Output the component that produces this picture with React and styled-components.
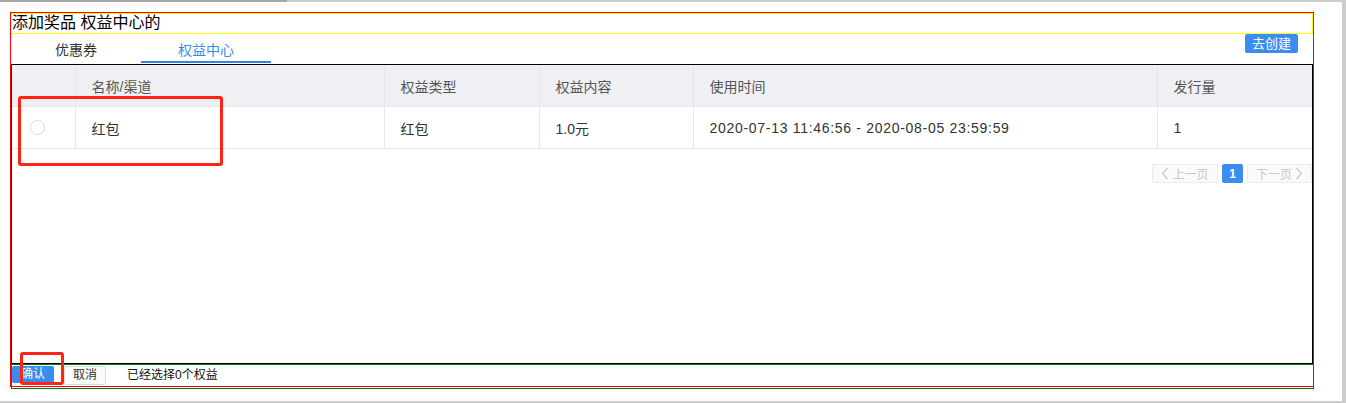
import styled, { createGlobalStyle } from 'styled-components';

const GlobalStyle = createGlobalStyle`
  html, body {
    margin: 0;
    padding: 0;
    background: #fff;
  }
  body {
    font-family: "Microsoft YaHei", "Liberation Sans", "Noto Sans CJK SC", sans-serif;
    color: #333;
  }
`;

const Page = styled.div`
  position: relative;
  width: 1346px;
  height: 403px;
  display: flex;
  flex-direction: column;
  overflow: hidden;
`;

const ScrollBar = styled.div`
  display: flex;
  height: 2px;
  background: #cdcdcd;
`;

const ScrollThumb = styled.div`
  width: 287px;
  background: #a6a6a6;
`;

const Middle = styled.div`
  flex: 1;
  display: flex;
`;

const Content = styled.div`
  flex: 1;
  padding: 10px 0 0 10px;
`;

const Gutter = styled.div`
  width: 4px;
  background: #cdcdcd;
`;

const BottomBar = styled.div`
  height: 2px;
  background: #cdcdcd;
`;

const Outline = styled.div`
  box-sizing: border-box;
  width: 1304px;
  height: 375px;
  border: 1px solid ${({ color }) => color || 'red'};
`;

const Title = styled.div`
  box-sizing: border-box;
  height: 21px;
  width: 1302px;
  border: 1px solid #ffff00;
  border-left: none;
  font-size: 16px;
  line-height: 18px;
  color: #000;
  padding-left: 1px;
`;

const TabRow = styled.div`
  display: flex;
  align-items: flex-start;
  height: 30px;
`;

const Tab = styled.div`
  box-sizing: border-box;
  width: 130px;
  height: 29px;
  padding-top: 5px;
  text-align: center;
  font-size: 14px;
  color: ${({ active }) => (active ? '#3a8ee6' : '#333')};
  border-bottom: 2px solid ${({ active }) => (active ? '#2f86e8' : 'transparent')};
`;

const CreateButton = styled.button`
  margin-left: auto;
  margin-right: 15px;
  width: 53px;
  height: 19px;
  border: none;
  border-radius: 2px;
  background: #3a8cf0;
  color: #fff;
  font-family: inherit;
  font-size: 13px;
  line-height: 19px;
  padding: 0;
`;

const TableBox = styled.div`
  box-sizing: border-box;
  width: 1302px;
  height: 300px;
  border: 1px solid #000;
  display: flex;
  flex-direction: column;
`;

const Table = styled.table`
  width: 1300px;
  border-collapse: collapse;
  table-layout: fixed;
  font-size: 14px;
`;

const Th = styled.th`
  height: 41px;
  padding: 0 16px;
  text-align: left;
  font-weight: normal;
  color: #555;
  background: #eff0f3;
  border-bottom: 1px solid #e8e8e8;
  border-left: ${({ first }) => (first ? 'none' : '1px solid #e8e8e8')};
`;

const Td = styled.td`
  height: 41px;
  padding: 0 16px;
  color: #333;
  letter-spacing: ${({ wide }) => (wide ? '0.7px' : 'normal')};
  border-bottom: 1px solid #e8e8e8;
  border-left: ${({ first }) => (first ? 'none' : '1px solid #e8e8e8')};
`;

const Radio = styled.span`
  display: block;
  box-sizing: border-box;
  width: 15px;
  height: 15px;
  margin-left: 2px;
  border: 1px solid #d9d9d9;
  border-radius: 50%;
`;

const Pager = styled.div`
  display: flex;
  justify-content: flex-end;
  gap: 4px;
  margin-top: 15px;
`;

const PageBtn = styled.span`
  box-sizing: border-box;
  height: 19px;
  width: ${({ w }) => w}px;
  display: flex;
  align-items: center;
  justify-content: center;
  gap: 3px;
  font-size: 12px;
  border: 1px solid ${({ current }) => (current ? '#3a8cf0' : '#ececec')};
  background: ${({ current }) => (current ? '#3a8cf0' : '#fafafa')};
  color: ${({ current }) => (current ? '#fff' : '#c5c8ce')};
  font-weight: ${({ current }) => (current ? 'bold' : 'normal')};
  border-radius: 2px;
`;

const Footer = styled.div`
  box-sizing: border-box;
  width: 1303px;
  height: 25px;
  border: 1px solid #008000;
  display: flex;
  align-items: flex-start;
  padding-top: 1px;
  font-size: 12px;
`;

const FooterButton = styled.button`
  height: ${({ primary }) => (primary ? '17px' : '19px')};
  padding: 0 ${({ primary }) => (primary ? '9px' : '8px')};
  margin-right: ${({ primary }) => (primary ? '10px' : '21px')};
  border: ${({ primary }) => (primary ? 'none' : '1px solid #dcdcdc')};
  background: ${({ primary }) => (primary ? '#3a8cf0' : '#fafafa')};
  color: ${({ primary }) => (primary ? '#fff' : '#333')};
  font-family: inherit;
  font-size: 12px;
  line-height: 17px;
  border-radius: 2px;
`;

const FooterText = styled.span`
  line-height: 19px;
  color: #111;
`;

const Mark = styled.div`
  position: absolute;
  box-sizing: border-box;
  border: 3px solid #ff2414;
  border-radius: 3px;
  left: ${({ x }) => x}px;
  top: ${({ y }) => y}px;
  width: ${({ w }) => w}px;
  height: ${({ h }) => h}px;
`;

const Chevron = ({ dir }) => (
  <svg width="8" height="13" viewBox="0 0 8 13">
    <path
      d={dir === 'left' ? 'M6.5 1 L1.5 6.5 L6.5 12' : 'M1.5 1 L6.5 6.5 L1.5 12'}
      fill="none"
      stroke="#c5c8ce"
      strokeWidth="1.2"
    />
  </svg>
);

const columns = [
  { key: 'radio', label: '', width: 63 },
  { key: 'name', label: '名称/渠道', width: 309 },
  { key: 'type', label: '权益类型', width: 155 },
  { key: 'content', label: '权益内容', width: 154 },
  { key: 'time', label: '使用时间', width: 464 },
  { key: 'count', label: '发行量', width: 155 },
];

const rows = [
  {
    name: '红包',
    type: '红包',
    content: '1.0元',
    time: '2020-07-13 11:46:56 - 2020-08-05 23:59:59',
    count: '1',
  },
];

const App = () => {
  return (
    <>
      <GlobalStyle />
      <Page>
        <ScrollBar>
          <ScrollThumb />
        </ScrollBar>
        <Middle>
          <Content>
            <Outline color="red">
              <Title>添加奖品 权益中心的</Title>
              <TabRow>
                <Tab>优惠券</Tab>
                <Tab active>权益中心</Tab>
                <CreateButton>去创建</CreateButton>
              </TabRow>
              <TableBox>
                <Table>
                  <colgroup>
                    {columns.map((c) => (
                      <col key={c.key} style={{ width: c.width }} />
                    ))}
                  </colgroup>
                  <thead>
                    <tr>
                      {columns.map((c, i) => (
                        <Th key={c.key} first={i === 0}>
                          {c.label}
                        </Th>
                      ))}
                    </tr>
                  </thead>
                  <tbody>
                    {rows.map((r, idx) => (
                      <tr key={idx}>
                        <Td first>
                          <Radio />
                        </Td>
                        <Td>{r.name}</Td>
                        <Td>{r.type}</Td>
                        <Td>{r.content}</Td>
                        <Td wide>{r.time}</Td>
                        <Td>{r.count}</Td>
                      </tr>
                    ))}
                  </tbody>
                </Table>
                <Pager>
                  <PageBtn w={66}>
                    <Chevron dir="left" />
                    上一页
                  </PageBtn>
                  <PageBtn w={21} current>
                    1
                  </PageBtn>
                  <PageBtn w={65}>
                    下一页
                    <Chevron dir="right" />
                  </PageBtn>
                </Pager>
              </TableBox>
              <Footer>
                <FooterButton primary>确认</FooterButton>
                <FooterButton>取消</FooterButton>
                <FooterText>已经选择0个权益</FooterText>
              </Footer>
            </Outline>
          </Content>
          <Gutter />
        </Middle>
        <BottomBar />
        <Mark x={18} y={96} w={205} h={70} />
        <Mark x={20} y={352} w={44} h={33} />
      </Page>
    </>
  );
};

export default App;
